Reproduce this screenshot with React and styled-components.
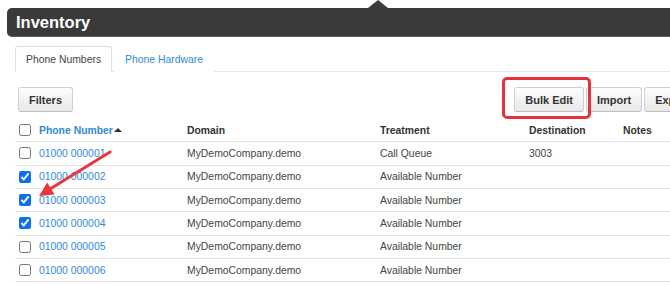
import React from "react";
import styled, { createGlobalStyle } from "styled-components";

const GlobalStyle = createGlobalStyle`
  html, body {
    margin: 0;
    padding: 0;
    background: #fff;
    overflow: hidden;
  }
  body {
    font-family: "Liberation Sans", Arial, sans-serif;
    color: #333;
  }
`;

const rows = [
  { number: "01000 000001", treatment: "Call Queue", destination: "3003", checked: false },
  { number: "01000 000002", treatment: "Available Number", destination: "", checked: true },
  { number: "01000 000003", treatment: "Available Number", destination: "", checked: true },
  { number: "01000 000004", treatment: "Available Number", destination: "", checked: true },
  { number: "01000 000005", treatment: "Available Number", destination: "", checked: false },
  { number: "01000 000006", treatment: "Available Number", destination: "", checked: false },
];

function App() {
  return (
    <Page>
      <GlobalStyle />
      <TitleBar>
        <Title>Inventory</Title>
      </TitleBar>
      <Content>
        <TabBar>
          <Tab $active>Phone Numbers</Tab>
          <Tab>Phone Hardware</Tab>
        </TabBar>
        <Toolbar>
          <Button>Filters</Button>
          <ButtonGroup>
            <Highlight>
              <Button>Bulk Edit</Button>
            </Highlight>
            <Button>Import</Button>
            <Button>Export</Button>
          </ButtonGroup>
        </Toolbar>
        <Table>
          <HeaderRow>
            <Cell>
              <Check type="checkbox" readOnly />
            </Cell>
            <Cell>
              <SortLink>Phone Number</SortLink>
              <SortCaret />
            </Cell>
            <Cell>Domain</Cell>
            <Cell>Treatment</Cell>
            <Cell>Destination</Cell>
            <Cell>Notes</Cell>
          </HeaderRow>
          {rows.map((r) => (
            <Row key={r.number}>
              <Cell>
                <Check type="checkbox" checked={r.checked} readOnly />
              </Cell>
              <Cell>
                <NumberLink>{r.number}</NumberLink>
              </Cell>
              <Cell>MyDemoCompany.demo</Cell>
              <Cell>{r.treatment}</Cell>
              <Cell>{r.destination}</Cell>
              <Cell />
            </Row>
          ))}
        </Table>
      </Content>
      <Arrow width="90" height="60" viewBox="0 0 90 60">
        <line x1="80" y1="7" x2="20" y2="44" stroke="#e8363a" strokeWidth="3" strokeLinecap="round" />
        <polygon points="9,51 24.5,49.5 17.2,37.6" fill="#e8363a" />
      </Arrow>
    </Page>
  );
}

export default App;

const Page = styled.div`
  position: relative;
  width: 720px;
  padding-top: 8px;
`;

const TitleBar = styled.header`
  position: relative;
  margin-left: 7px;
  height: 28px;
  display: flex;
  align-items: center;
  padding-left: 9px;
  background: #3a3a3a;
  border-bottom: 1px solid #5c5c5c;
  border-radius: 5px 0 0 5px;

  &::before {
    content: "";
    position: absolute;
    left: 361px;
    top: -8px;
    border-left: 10px solid transparent;
    border-right: 10px solid transparent;
    border-bottom: 8px solid #3a3a3a;
  }
`;

const Title = styled.h1`
  margin: 0;
  font-size: 16.5px;
  font-weight: bold;
  color: #fff;
`;

const Content = styled.div`
  margin-left: 15px;
  width: 689px;
`;

const TabBar = styled.nav`
  display: flex;
  margin-top: 9px;
  border-bottom: 1px solid #e6e6e6;
`;

const Tab = styled.div`
  height: 24px;
  display: flex;
  align-items: center;
  padding: 0 10px;
  margin-bottom: -1px;
  margin-right: 2px;
  font-size: 10.4px;
  color: ${(p) => (p.$active ? "#444" : "#2f8ad8")};
  background: #fff;
  border: 1px solid ${(p) => (p.$active ? "#dedede" : "transparent")};
  border-bottom-color: transparent;
  border-radius: 3px 3px 0 0;
`;

const Toolbar = styled.div`
  display: flex;
  align-items: center;
  margin-top: 15px;
  padding: 0 3px;
`;

const ButtonGroup = styled.div`
  display: flex;
  gap: 2px;
  margin-left: auto;
`;

const Button = styled.button`
  height: 25px;
  padding: 0 10px;
  font-family: "Liberation Sans", Arial, sans-serif;
  font-size: 11px;
  font-weight: bold;
  color: #333;
  background: linear-gradient(#fdfdfd, #e8e8e8);
  border: 1px solid #cfcfcf;
  border-bottom-color: #bdbdbd;
  border-radius: 3px;
`;

const Highlight = styled.span`
  position: relative;
  display: flex;

  &::after {
    content: "";
    position: absolute;
    top: -10px;
    left: -12px;
    right: -7px;
    bottom: -7px;
    border: 3px solid #e5333b;
    border-radius: 5px;
  }
`;

const Table = styled.div`
  margin-top: 7px;
`;

const Row = styled.div`
  display: grid;
  grid-template-columns: 24px 148px 193px 149px 94px 1fr;
  align-items: center;
  height: 23.33px;
  box-sizing: border-box;
  border-bottom: 1px solid #e3e3e3;
  font-size: 10.4px;
  color: #444;
`;

const HeaderRow = styled(Row)`
  font-weight: bold;
  color: #333;
`;

const Cell = styled.div`
  display: flex;
  align-items: center;
  white-space: nowrap;
  &:first-child {
    padding-left: 4px;
  }
`;

const Check = styled.input`
  width: 12px;
  height: 12px;
  margin: 0;
  accent-color: #0a6ff0;
`;

const NumberLink = styled.span`
  color: #2f8ad8;
`;

const SortLink = styled.span`
  color: #2f8ad8;
`;

const SortCaret = styled.span`
  margin-left: 1px;
  border-left: 4px solid transparent;
  border-right: 4px solid transparent;
  border-bottom: 4px solid #333;
`;

const Arrow = styled.svg`
  position: absolute;
  left: 30px;
  top: 145px;
  pointer-events: none;
`;
